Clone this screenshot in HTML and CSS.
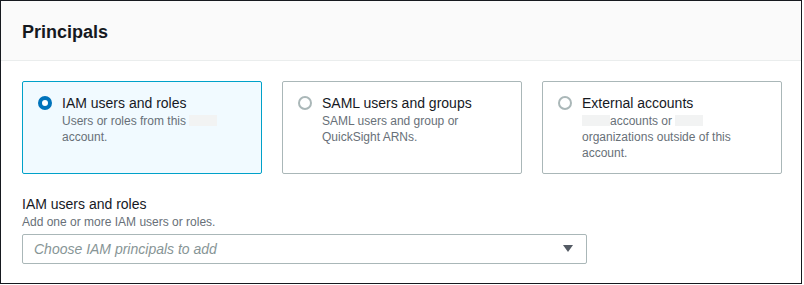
FILE: index.html
```html
<!DOCTYPE html>
<html>
<head>
<meta charset="utf-8">
<link rel="stylesheet" href="styles.css">
</head>
<body>
<div class="panel">
  <div class="panel-header">
    <h2 class="panel-title">Principals</h2>
  </div>
  <div class="panel-body">
    <div class="tiles">
      <div class="tile tile-selected">
        <span class="radio radio-on"></span>
        <div class="tile-text">
          <div class="tile-title">IAM users and roles</div>
          <div class="tile-desc">Users or roles from this <span class="redact"></span><br>account.</div>
        </div>
      </div>
      <div class="tile">
        <span class="radio"></span>
        <div class="tile-text">
          <div class="tile-title">SAML users and groups</div>
          <div class="tile-desc">SAML users and group or<br>QuickSight ARNs.</div>
        </div>
      </div>
      <div class="tile">
        <span class="radio"></span>
        <div class="tile-text">
          <div class="tile-title">External accounts</div>
          <div class="tile-desc"><span class="redact"></span>accounts or <span class="redact"></span><br>organizations outside of this<br>account.</div>
        </div>
      </div>
    </div>
    <div class="field">
      <div class="field-label">IAM users and roles</div>
      <div class="field-desc">Add one or more IAM users or roles.</div>
      <div class="select">
        <span class="placeholder">Choose IAM principals to add</span>
        <svg class="caret" width="10" height="8" viewBox="0 0 10 8"><path d="M0 0H10L5 7Z" fill="#545b64"/></svg>
      </div>
    </div>
  </div>
</div>
</body>
</html>
```

FILE: styles.css
```css
* { box-sizing: border-box; }
html, body { margin: 0; padding: 0; background: #fff; }
body {
  font-family: "Liberation Sans", Arial, sans-serif;
  color: #16191f;
}
.panel {
  width: 802px;
  height: 284px;
  border: 1px solid #16191f;
  background: #fff;
  overflow: hidden;
}
.panel-header {
  height: 60px;
  background: #fafafa;
  border-bottom: 1px solid #eaeded;
  padding: 20px 21px 0;
}
.panel-title {
  margin: 0;
  font-size: 18px;
  line-height: 22px;
  font-weight: 700;
  color: #16191f;
}
.panel-body {
  padding: 20px 21px 20px;
}
.tiles {
  display: grid;
  grid-template-columns: 240px 240px 240px;
  column-gap: 20px;
}
.tile {
  display: flex;
  align-items: flex-start;
  gap: 10px;
  border: 1px solid #aab7b8;
  border-radius: 2px;
  padding: 11px 15px 12px;
  background: #fff;
}
.tile-selected {
  border-color: #00a1c9;
  background: #f1faff;
}
.radio {
  flex: none;
  width: 14px;
  height: 14px;
  margin-top: 3px;
  border-radius: 50%;
  border: 2px solid #aab7b8;
  background: #fff;
}
.radio.radio-on {
  border: 4px solid #0073bb;
}
.tile-title {
  font-size: 14px;
  line-height: 20px;
  color: #16191f;
}
.tile-desc {
  font-size: 12px;
  line-height: 16px;
  color: #687078;
}
.redact {
  display: inline-block;
  width: 28px;
  height: 11px;
  vertical-align: -1px;
  background: #f2f3f3;
}
.field {
  margin-top: 20px;
}
.field-label {
  font-size: 14px;
  line-height: 20px;
  color: #16191f;
}
.field-desc {
  font-size: 12px;
  line-height: 16px;
  color: #687078;
}
.select {
  margin-top: 4px;
  width: 565px;
  height: 30px;
  border: 1px solid #aab7b8;
  border-radius: 2px;
  display: flex;
  align-items: center;
  justify-content: space-between;
  padding: 0 13px 0 11px;
}
.placeholder {
  font-size: 14px;
  font-style: italic;
  color: #879596;
}
.caret { display: block; }
```
